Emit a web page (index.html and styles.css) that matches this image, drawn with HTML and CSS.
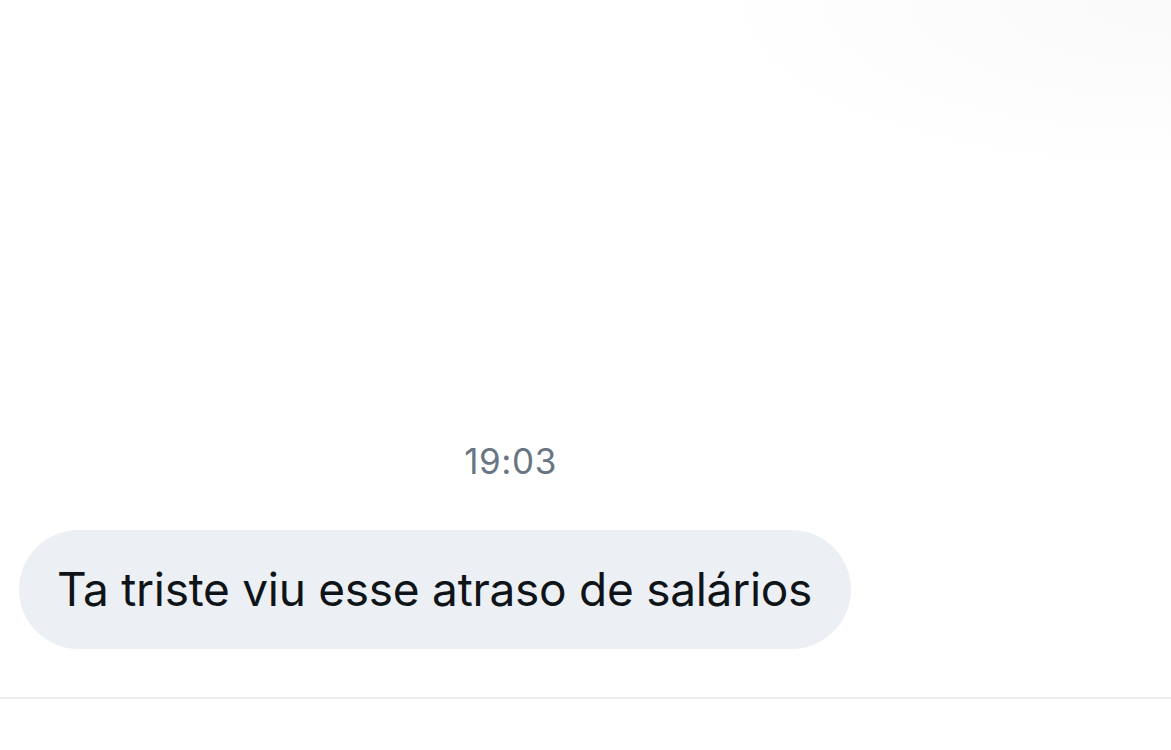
FILE: index.html
```html
<!DOCTYPE html>
<html lang="pt">
<head>
<meta charset="utf-8">
<link rel="stylesheet" href="styles.css">
</head>
<body>
<div class="page">
  <div class="conversation">
    <div class="time">19:03</div>
    <div class="row">
      <div class="bubble">Ta triste viu esse atraso de salários</div>
    </div>
  </div>
  <div class="divider"></div>
  <div class="composer"></div>
</div>
</body>
</html>
```
FILE: styles.css
```css
html, body {
  margin: 0;
  padding: 0;
  background: #ffffff;
}
.page {
  width: 1171px;
  height: 750px;
  display: flex;
  flex-direction: column;
  font-family: "Inter", "Roboto", "Liberation Sans", sans-serif;
  background:
    radial-gradient(ellipse 470px 180px at 1171px 0px, rgba(0,0,0,0.025), rgba(0,0,0,0) 100%),
    #ffffff;
  overflow: hidden;
}
.conversation {
  flex: 1;
  display: flex;
  flex-direction: column;
  justify-content: flex-end;
  padding: 0 0 48px 19px;
}
.time {
  width: 983px;
  text-align: center;
  font-size: 35px;
  color: #687684;
  letter-spacing: 0.6px;
  margin-bottom: 48px;
}
.row {
  display: flex;
}
.bubble {
  background: #ecf0f4;
  color: #0f1419;
  font-size: 46px;
  letter-spacing: -0.27px;
  line-height: 119px;
  height: 119px;
  padding: 0 39px 0 38px;
  border-radius: 60px;
  white-space: nowrap;
}
.divider {
  height: 2px;
  background: #ececec;
}
.composer {
  height: 51px;
}
```
